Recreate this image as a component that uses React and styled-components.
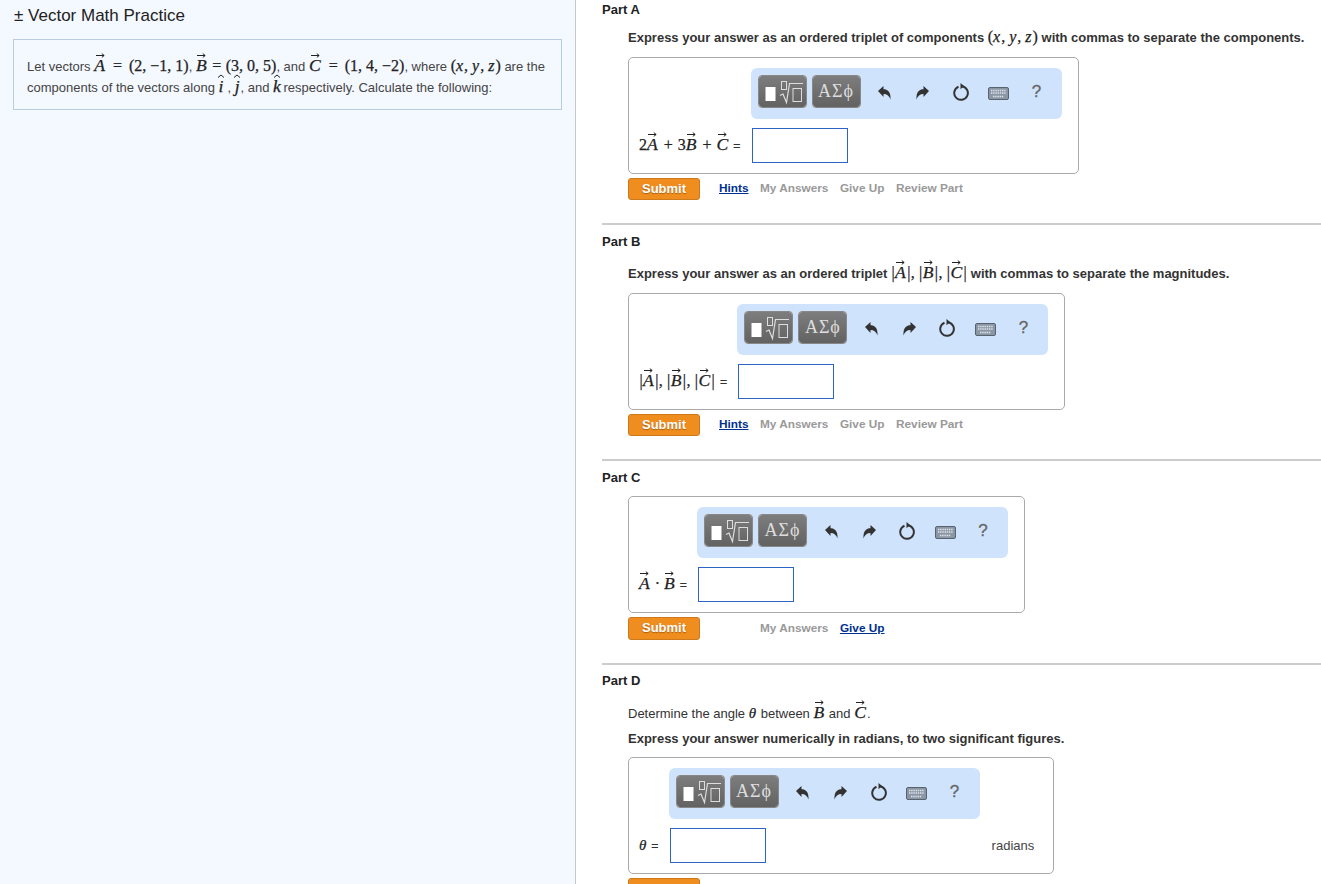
import React from 'react';
import styled, { createGlobalStyle } from 'styled-components';

const GlobalStyle = createGlobalStyle`
  html, body {
    margin: 0;
    padding: 0;
    background: #fff;
    font-family: "Liberation Sans", Arial, sans-serif;
    color: #333;
  }
`;

const Page = styled.div`
  display: grid;
  grid-template-columns: 576px 1fr;
  height: 884px;
  overflow: hidden;
`;

const Sidebar = styled.aside`
  background: #f4f8ff;
  border-right: 1px solid #c8c8c8;
  padding: 6px 13px 0;
`;

const Title = styled.h1`
  margin: 0 0 14px 1px;
  font-size: 17px;
  line-height: 19px;
  font-weight: 400;
  color: #222;
`;

const Intro = styled.div`
  border: 1px solid #b9cde0;
  padding: 16px 13px 11px;
  font-size: 13px;
  line-height: 21px;
  color: #444;
`;

const Main = styled.main`
  padding-left: 26px;
  min-width: 0;
`;

const Section = styled.section`
  padding: ${(p) => p.$top}px 0 23px;
  border-top: 2px solid #ccc;

  &:first-child {
    border-top: 0;
  }
`;

const PartLabel = styled.h2`
  margin: 0;
  font-size: 13px;
  line-height: 16px;
  font-weight: 700;
  color: #222;
`;

const Body = styled.div`
  padding-left: 26px;
`;

const Prompt = styled.p`
  margin: ${(p) => p.$top || 12}px 0 ${(p) => p.$bottom || 11}px;
  font-size: 13px;
  line-height: 16px;
  font-weight: ${(p) => (p.$plain ? 400 : 700)};
  color: #333;
`;

const AnswerBox = styled.div`
  display: inline-grid;
  grid-template-columns: ${(p) => (p.$units ? 'auto 310px auto' : 'auto 310px')};
  column-gap: 11px;
  row-gap: 9px;
  align-items: center;
  margin-top: ${(p) => p.$top || 0}px;
  padding: 10px 16px 10px 10px;
  border: 1px solid #aaa;
  border-radius: 5px;
  background: #fff;
  vertical-align: top;
`;

const Toolbar = styled.div`
  grid-column: 2;
  grid-row: 1;
  display: flex;
  align-items: flex-start;
  height: 51px;
  box-sizing: border-box;
  margin-left: -1px;
  padding: 7px 5px 0 7px;
  background: #cfe4fc;
  border-radius: 6px;
`;

const PaletteButton = styled.div`
  display: flex;
  align-items: center;
  justify-content: center;
  width: 49px;
  height: 33px;
  box-sizing: border-box;
  margin-right: 5px;
  border: 1px solid #ddd;
  outline: 1px solid #888;
  outline-offset: -1px;
  border-radius: 4px;
  background: linear-gradient(#7d7d7d, #626262);
  color: #ddd;
  font-family: "Liberation Serif", serif;
  font-size: 18px;
  letter-spacing: 1px;
`;

const ToolIcon = styled.div`
  display: flex;
  align-items: center;
  justify-content: center;
  width: 38px;
  height: 33px;
  padding-top: ${(p) => p.$drop || 0}px;
  box-sizing: border-box;
`;

const HelpMark = styled.span`
  font-size: 17px;
  color: #666;
  -webkit-text-stroke: 0.3px #666;
`;

const FieldLabel = styled.div`
  grid-column: 1;
  grid-row: 2;
  justify-self: start;
  font-size: 13px;
  color: #333;
  white-space: nowrap;
`;

const Equals = styled.span`
  margin-left: ${(p) => p.$left || 0}px;
`;

const Input = styled.div`
  grid-column: 2;
  grid-row: 2;
  width: 96px;
  height: 35px;
  box-sizing: border-box;
  border: 1px solid #2c63c4;
  background: #fff;
`;

const Units = styled.div`
  grid-column: 3;
  grid-row: 2;
  font-size: 13px;
  color: #444;
  padding: 0 3px 0 1px;
`;

const ActionRow = styled.div`
  display: flex;
  align-items: center;
  margin-top: 4px;
`;

const Submit = styled.div`
  display: flex;
  align-items: center;
  justify-content: center;
  width: 72px;
  height: ${(p) => (p.$tall ? 23 : 22)}px;
  box-sizing: border-box;
  padding-bottom: 2px;
  border: 1px solid #cd7a1c;
  border-radius: 3px;
  background: #f08d1f;
  color: #fff;
  font-size: 13px;
  font-weight: 700;
  text-shadow: 0 1px 1px #a8600f;
`;

const Links = styled.div`
  display: flex;
  gap: 11.5px;
  padding-bottom: 2px;
  margin-left: ${(p) => p.$indent || 19}px;
`;

const Action = styled.span`
  font-size: 11.8px;
  font-weight: 700;
  color: ${(p) => (p.$active ? '#00308f' : '#999')};
  text-decoration: ${(p) => (p.$active ? 'underline' : 'none')};
`;

const Math = styled.span`
  font-family: "Liberation Serif", "DejaVu Serif", serif;
  font-size: ${(p) => p.$size || 16}px;
  line-height: 0;
  font-weight: 400;
  color: #222;
  white-space: nowrap;
  -webkit-text-stroke: 0.25px currentColor;
`;

const Var = styled.i`
  font-style: italic;
  margin-right: 1px;
`;

const Op = styled.span`
  margin: 0 ${(p) => p.$gap || 4.5}px;
`;

const Bar = styled.span`
  margin: 0 0.4px;
`;

const Accent = styled.span`
  position: relative;
  font-size: 1.1em;
  font-style: italic;
  margin-right: ${(p) => p.$right ?? 1}px;
`;

const AccentMark = styled.svg`
  position: absolute;
  left: 50%;
  top: -2px;
  transform: translateX(-50%);
  overflow: visible;
`;

const Vec = ({ children }) => (
  <Accent>
    {children}
    <AccentMark width="10" height="5" viewBox="0 0 10 5" fill="none" stroke="#222" strokeWidth="1">
      <path d="M1 2.5h8M6.8 .6 9.2 2.5 6.8 4.4" />
    </AccentMark>
  </Accent>
);

const Hat = ({ children, right }) => (
  <Accent $right={right}>
    {children}
    <AccentMark width="8" height="4" viewBox="0 0 8 4" fill="none" stroke="#222" strokeWidth="1">
      <path d="M1 3.5 4 1l3 2.5" />
    </AccentMark>
  </Accent>
);

const Magnitudes = () => (
  <Math>
    <Bar>|</Bar>
    <Vec>A</Vec>
    <Bar>|</Bar>, <Bar>|</Bar>
    <Vec>B</Vec>
    <Bar>|</Bar>, <Bar>|</Bar>
    <Vec>C</Vec>
    <Bar>|</Bar>
  </Math>
);

const TemplateIcon = () => (
  <svg width="47" height="31" viewBox="0 0 47 31" fill="none">
    <rect x="6.5" y="11" width="10" height="14" fill="#fff" />
    <rect x="22.5" y="5.5" width="5" height="8" stroke="#ddd" />
    <path d="M21 19.5l3-1.5 3.5 8.5L30.5 7.5H44" stroke="#ddd" strokeWidth="1.2" />
    <rect x="34" y="12.5" width="8.5" height="13" stroke="#ddd" />
  </svg>
);

const UndoIcon = ({ flip }) => (
  <svg width="15" height="16" viewBox="0 0 15 16" style={flip ? { transform: 'scaleX(-1)' } : undefined}>
    <path d="M1 6 6.5 1v3.2c4 0 7.5 2.3 7 10.3C12.5 11 10 9 6.5 9v3z" fill="#333" />
  </svg>
);

const ResetIcon = () => (
  <svg width="18" height="18" viewBox="0 0 18 18" fill="none">
    <path d="M6.5 3.7a6.8 6.8 0 1 0 3.3-.45" stroke="#333" strokeWidth="2" />
    <path d="M8.5 0v6.2l3.6-3.1z" fill="#333" />
  </svg>
);

const KeyboardIcon = () => (
  <svg width="21" height="13" viewBox="0 0 21 13">
    <rect x="0.5" y="0.5" width="20" height="12" rx="1.5" fill="#8c97a6" stroke="#59636f" />
    <path d="M3 3.5h15M3 6h15M5 9.5h11" stroke="#dfe5ec" strokeWidth="1.4" strokeDasharray="1.4 .8" />
  </svg>
);

const AnswerTools = () => (
  <Toolbar>
    <PaletteButton>
      <TemplateIcon />
    </PaletteButton>
    <PaletteButton>ΑΣϕ</PaletteButton>
    <ToolIcon $drop={2}>
      <UndoIcon />
    </ToolIcon>
    <ToolIcon $drop={2}>
      <UndoIcon flip />
    </ToolIcon>
    <ToolIcon>
      <ResetIcon />
    </ToolIcon>
    <ToolIcon $drop={4}>
      <KeyboardIcon />
    </ToolIcon>
    <ToolIcon>
      <HelpMark>?</HelpMark>
    </ToolIcon>
  </Toolbar>
);

const Answer = ({ label, units, top }) => (
  <AnswerBox $top={top} $units={!!units}>
    <AnswerTools />
    <FieldLabel>{label}</FieldLabel>
    <Input />
    {units && <Units>{units}</Units>}
  </AnswerBox>
);

const Actions = ({ hints = true, giveUpActive, review = true, tall }) => (
  <ActionRow>
    <Submit $tall={tall}>Submit</Submit>
    <Links $indent={hints ? 19 : 60}>
      {hints && <Action $active>Hints</Action>}
      <Action>My Answers</Action>
      <Action $active={giveUpActive}>Give Up</Action>
      {review && <Action>Review Part</Action>}
    </Links>
  </ActionRow>
);

export default function App() {
  return (
    <>
      <GlobalStyle />
      <Page>
        <Sidebar>
          <Title>± Vector Math Practice</Title>
          <Intro>
            Let vectors{' '}
            <Math>
              <Vec>A</Vec>
              <Op $gap={7}>=</Op>(2, −1, 1)
            </Math>
            ,{' '}
            <Math>
              <Vec>B</Vec>
              <Op>=</Op>(3, 0, 5)
            </Math>
            , and{' '}
            <Math>
              <Vec>C</Vec>
              <Op $gap={7}>=</Op>(1, 4, −2)
            </Math>
            , where{' '}
            <Math>
              (<Var>x</Var>, <Var>y</Var>, <Var>z</Var>)
            </Math>{' '}
            are the components of the vectors along{' '}
            <Math>
              <Hat right={4}>i</Hat>
            </Math>
            ,{' '}
            <Math>
              <Hat>j</Hat>
            </Math>
            , and{' '}
            <Math>
              <Hat right={-1}>k</Hat>
            </Math>{' '}
            respectively. Calculate the following:
          </Intro>
        </Sidebar>

        <Main>
          <Section $top={2}>
            <PartLabel>Part A</PartLabel>
            <Body>
              <Prompt>
                Express your answer as an ordered triplet of components{' '}
                <Math>
                  (<Var>x</Var>, <Var>y</Var>, <Var>z</Var>)
                </Math>{' '}
                with commas to separate the components.
              </Prompt>
              <Answer
                label={
                  <>
                    <Math>
                      2<Vec>A</Vec>
                      <Op $gap={5}>+</Op>3<Vec>B</Vec>
                      <Op $gap={5}>+</Op>
                      <Vec>C</Vec>
                    </Math>{' '}
                    =
                  </>
                }
              />
              <Actions />
            </Body>
          </Section>

          <Section $top={9}>
            <PartLabel>Part B</PartLabel>
            <Body>
              <Prompt $top={16}>
                Express your answer as an ordered triplet <Magnitudes /> with commas to separate the magnitudes.
              </Prompt>
              <Answer
                label={
                  <>
                    <Magnitudes /> <Equals $left={1}>=</Equals>
                  </>
                }
              />
              <Actions />
            </Body>
          </Section>

          <Section $top={9}>
            <PartLabel>Part C</PartLabel>
            <Body>
              <Answer
                top={10}
                label={
                  <>
                    <Math>
                      <Vec>A</Vec>
                      <Op $gap={4}>·</Op>
                      <Vec>B</Vec>
                    </Math>{' '}
                    =
                  </>
                }
              />
              <Actions hints={false} giveUpActive review={false} tall />
            </Body>
          </Section>

          <Section $top={8}>
            <PartLabel>Part D</PartLabel>
            <Body>
              <Prompt $plain $top={17} $bottom={9}>
                Determine the angle{' '}
                <Math $size={15}>
                  <Var>θ</Var>
                </Math>{' '}
                between{' '}
                <Math>
                  <Vec>B</Vec>
                </Math>{' '}
                and{' '}
                <Math>
                  <Vec>C</Vec>
                </Math>
                .
              </Prompt>
              <Prompt $top={9} $bottom={10}>
                Express your answer numerically in radians, to two significant figures.
              </Prompt>
              <Answer
                units="radians"
                label={
                  <>
                    <Math $size={15}>
                      <Var>θ</Var>
                    </Math>{' '}
                    =
                  </>
                }
              />
              <Actions />
            </Body>
          </Section>
        </Main>
      </Page>
    </>
  );
}
